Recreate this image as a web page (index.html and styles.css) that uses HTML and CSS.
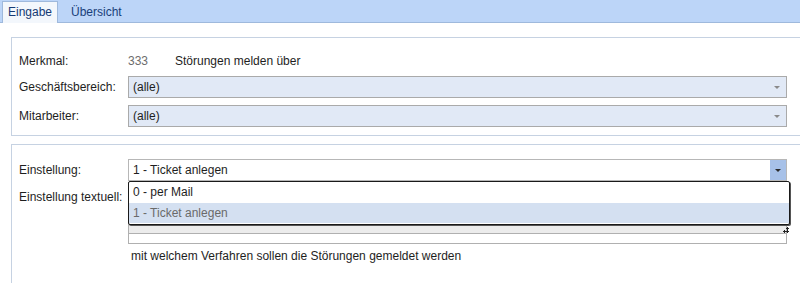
FILE: index.html
```html
<!DOCTYPE html>
<html lang="de">
<head>
    <meta charset="UTF-8">
    <title>Merkmal 333</title>
    <link rel="stylesheet" href="styles.css">
</head>
<body>
    <div class="tabs">
        <div class="tab active">Eingabe</div>
        <div class="tab">Übersicht</div>
    </div>

    <div class="page">
        <div class="group">
            <div class="row head">
                <span class="label">Merkmal:</span>
                <span class="num">333</span>
                <span class="title">Störungen melden über</span>
            </div>
            <div class="row">
                <span class="label">Geschäftsbereich:</span>
                <div class="combo readonly">(alle)<span class="arrow"></span></div>
            </div>
            <div class="row">
                <span class="label">Mitarbeiter:</span>
                <div class="combo readonly">(alle)<span class="arrow"></span></div>
            </div>
        </div>

        <div class="group second">
            <div class="row">
                <span class="label">Einstellung:</span>
                <div class="combo open">1 - Ticket anlegen<span class="btn"><span class="arrow"></span></span></div>
            </div>
            <div class="row textrow">
                <span class="label">Einstellung textuell:</span>
                <div class="textbox">
                    <div class="area"></div>
                    <div class="bar"></div>
                    <div class="field"></div>
                    <span class="grip"></span>
                </div>
                <ul class="droplist">
                    <li>0 - per Mail</li>
                    <li class="sel">1 - Ticket anlegen</li>
                </ul>
            </div>
            <p class="hint">mit welchem Verfahren sollen die Störungen gemeldet werden</p>
        </div>
    </div>
</body>
</html>
```

FILE: styles.css
```css
body {
    margin: 0;
    font-family: "Liberation Sans", Arial, sans-serif;
    font-size: 12px;
    color: #1e1e1e;
    background: #fff;
    overflow: hidden;
}
.tabs {
    display: flex;
    height: 22px;
    padding-left: 2px;
    background: #bcd5f8;
    border-bottom: 1px solid #9fb9dc;
    align-items: flex-end;
}
.tab {
    padding: 0 8px 0 13px;
    height: 20px;
    line-height: 21px;
    color: #1a3f7a;
}
.tab.active {
    width: 49px;
    padding: 0 0 0 5px;
    background: #f3f7fc;
    border: 1px solid #9fb9dc;
    border-bottom: none;
    height: 21px;
    margin-bottom: -1px;
    color: #153a74;
}
.page {
    padding: 14px 0 0 11px;
}
.group {
    height: 83px;
    padding: 14px 0 0 7px;
    border: 1px solid #c6d2e2;
    border-right: none;
}
.group.second {
    margin-top: 8px;
    height: 150px;
    padding-top: 14px;
}
.row {
    display: flex;
    align-items: center;
    margin-bottom: 7px;
}
.second .row {
    margin-bottom: 1px;
}
.row.head {
    height: 18px;
    margin-bottom: 6px;
}
.label {
    width: 109px;
}
.num {
    width: 47px;
    color: #6d6d6d;
}
.combo {
    position: relative;
    width: 653px;
    height: 20px;
    line-height: 20px;
    padding-left: 4px;
    border: 1px solid #aaaaaa;
}
.combo.readonly {
    background: #e1e9f6;
}
.combo .arrow {
    position: absolute;
    right: 6px;
    top: 9px;
    border: 3px solid transparent;
    border-top: 3px solid #8a8a8a;
}
.combo.open {
    background: #fff;
    border-color: #b7b7b7;
}
.combo .btn {
    position: absolute;
    right: 0;
    top: 0;
    width: 16px;
    height: 20px;
    background: #a7c1e8;
}
.combo .btn .arrow {
    right: 5px;
    border-top-color: #2c2c2c;
}
.textrow {
    position: relative;
    align-items: flex-start;
}
.textrow .label {
    padding-top: 8px;
}
.textbox {
    position: relative;
    width: 657px;
    border: 1px solid #b0b0b0;
}
.area {
    height: 42px;
}
.bar {
    height: 8px;
    background: #ececec;
    border-bottom: 1px solid #b0b0b0;
}
.field {
    height: 9px;
}
.grip {
    position: absolute;
    right: -3px;
    top: 44px;
    width: 6px;
    height: 6px;
    background:
        radial-gradient(circle, #222 1px, transparent 1.3px) 3px 0 / 3px 3px no-repeat,
        radial-gradient(circle, #222 1px, transparent 1.3px) 0 3px / 3px 3px no-repeat,
        radial-gradient(circle, #222 1px, transparent 1.3px) 3px 3px / 3px 3px no-repeat;
}
.droplist {
    position: absolute;
    left: 109px;
    top: -1px;
    width: 660px;
    margin: 0;
    padding: 0 0 1px;
    list-style: none;
    background: #fff;
    border: 1px solid #1a1a1a;
    border-radius: 2px;
    box-shadow: 1px 1px 0 #555;
}
.droplist li {
    height: 20px;
    line-height: 20px;
    padding-left: 4px;
}
.droplist li:first-child {
    height: 21px;
}
.droplist li.sel {
    background: #d4e0f1;
    color: #6a6a6a;
}
.hint {
    margin: 5px 0 0 112px;
}
```
